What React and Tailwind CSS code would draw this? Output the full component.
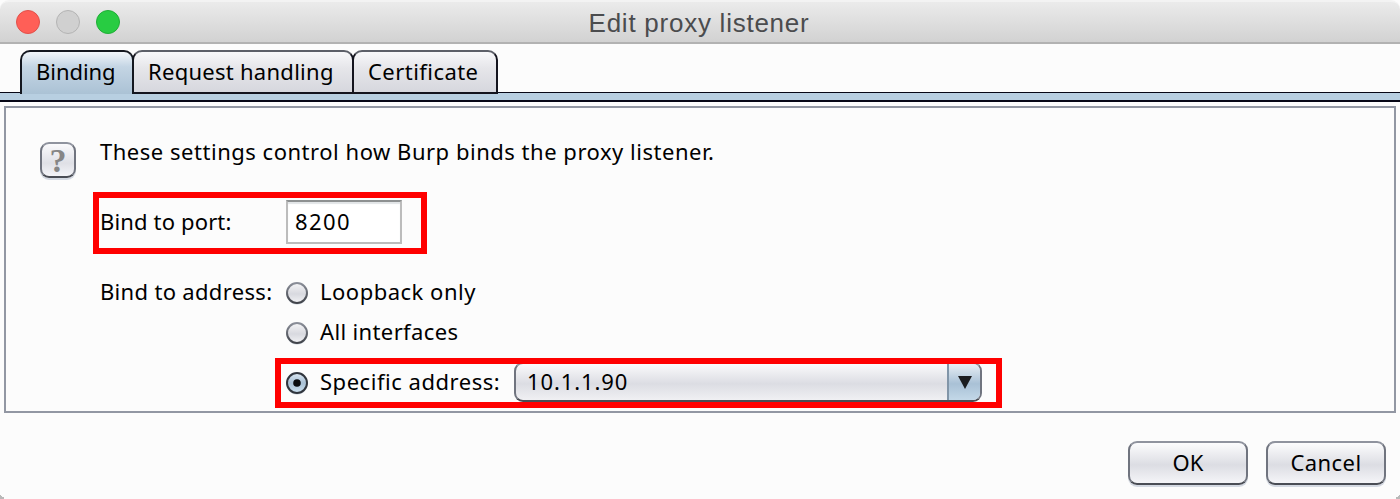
import { useState } from 'react';

const TABS = [
  { id: 'binding',     label: 'Binding',          box: 'w-[114px]', text: 'tracking-[-0.05px]' },
  { id: 'request',     label: 'Request handling', box: 'w-[222px] -ml-[2px]', text: 'tracking-[0.27px]' },
  { id: 'certificate', label: 'Certificate',      box: 'w-[146px] -ml-[2px]', text: 'tracking-[0.45px]' },
];

const TrafficLights = () => (
  <div className="absolute left-4 top-[10px] flex gap-4">
    <span className="w-6 h-6 rounded-full bg-[#ff5f57] border border-[#e2504a]"/>
    <span className="w-6 h-6 rounded-full bg-[#d0d0d0] border border-[#b4b4b4]"/>
    <span className="w-6 h-6 rounded-full bg-[#28cc42] border border-[#1fae36]"/>
  </div>
);

const CornerMark = ({ className }) => (
  <svg className={className} width="4" height="4" viewBox="0 0 4 4">
    <path d="M0 0H1V1H2V2H4V4H0Z" fill="#b9b9b9"/>
  </svg>
);

const Tab = ({ tab, active, onClick }) => (
  <button
    onClick={onClick}
    className={`relative shrink-0 text-left pl-[16px] h-[44px] border-2 rounded-t-[10px] ${tab.box} ${active
      ? 'z-10 border-[#14171f] border-b-0 bg-linear-to-b from-[#f2f6fa] via-[#c4d5e4] via-35% to-[#abc2d5]'
      : 'border-[#14141e] border-t-[#5c5f68] bg-linear-to-b from-[#f8f8fa] via-[#e6e6ea] via-40% to-[#d6d7de]'}`}>
    <span className={`block -ml-[2px] leading-[40px] whitespace-nowrap ${active ? '-mt-[4px]' : '-mt-[2px]'} ${tab.text}`}>{tab.label}</span>
  </button>
);

const Radio = ({ checked, onChange }) => (
  <button onClick={onChange} className="w-[22px] h-[23px] mt-[2px] shrink-0">
    <svg className="block" width="22" height="23" viewBox="0 0 22 23">
      <defs>
        <linearGradient id="ring" x1="0" y1="0" x2="0" y2="1">
          <stop offset="0" stopColor="#8b8f99"/>
          <stop offset="1" stopColor="#3f4249"/>
        </linearGradient>
        <linearGradient id="off" x1="0" y1="0" x2="0" y2="1">
          <stop offset="0" stopColor="#f5f5f7"/>
          <stop offset="0.55" stopColor="#d8d9df"/>
          <stop offset="1" stopColor="#f2f2f5"/>
        </linearGradient>
        <linearGradient id="on" x1="0" y1="0" x2="0" y2="1">
          <stop offset="0" stopColor="#dce8f2"/>
          <stop offset="0.5" stopColor="#a8c0d5"/>
          <stop offset="1" stopColor="#cfe3f2"/>
        </linearGradient>
      </defs>
      <circle cx="11" cy="12.3" r="10.4" fill="#d5dbe3"/>
      <circle cx="11" cy="11" r="10" fill={checked ? 'url(#on)' : 'url(#off)'} stroke={checked ? '#30353d' : 'url(#ring)'} strokeWidth="2"/>
      {checked && <circle cx="11" cy="11" r="3.8" fill="#0b0d10"/>}
    </svg>
  </button>
);

const Button = ({ children, text }) => (
  <button className={`w-[120px] h-[44px] rounded-[9px] border-2 border-[#70747f] border-t-[#8f939e] border-b-[#4a4d55] bg-linear-to-b from-[#fcfcfd] via-[#dcdde3] via-55% to-[#f5f5f8] shadow-[0_2px_0_#d4d9e2] leading-[38px] pb-[2px] ${text}`}>
    {children}
  </button>
);

const App = () => {
  const [activeTab, setActiveTab] = useState('binding');
  const [address,   setAddress]   = useState('specific');
  const [port,      setPort]      = useState('8200');

  return (
    <div className="relative w-[1400px] h-[499px] overflow-hidden bg-[#fcfcfc] text-black text-[22px] font-['Noto_Sans',sans-serif] flex flex-col">

      {/* Title bar */}
      <header className="relative h-[44px] shrink-0 rounded-t-[9px] border-t-2 border-t-[#f3f3f3] border-b-2 border-b-[#b2b2b2] bg-linear-to-b from-[#ebebeb] to-[#d2d2d2] flex justify-center">
        <div className="absolute left-0 -top-[2px]"><TrafficLights/></div>
        <h1 className="-ml-[2px] font-['Liberation_Sans',sans-serif] text-[26px] leading-[42px] text-[#4b4c4e] tracking-[0.75px] whitespace-nowrap">Edit proxy listener</h1>
      </header>

      {/* Tabs */}
      <nav className="h-[50px] shrink-0 pt-[6px] pl-5 flex items-start">
        {TABS.map(t => <Tab key={t.id} tab={t} active={t.id === activeTab} onClick={() => setActiveTab(t.id)}/>)}
      </nav>
      <div className="h-[10px] -mt-[2px] shrink-0 border-t border-t-[#070716] border-b-2 border-b-[#070716] bg-[#b8cfe1]"/>

      {/* Binding panel */}
      <main className="mx-1 mt-1 h-[307px] shrink-0 border-2 border-[#9297a3] flex">
        <div className="w-[94px] shrink-0 pt-[34px] pl-[34px]">
          <div className="w-[36px] h-[36px] rounded-[9px] border-2 border-[#70747f] border-t-[#8f939e] border-b-[#4a4d55] bg-linear-to-b from-[#fafafc] via-[#dfe0e6] via-60% to-[#f4f4f8] shadow-[0_2px_0_#d4d9e2] flex justify-center font-['Liberation_Serif',serif] font-bold text-[34px] leading-[34px] text-[#868686]">?</div>
        </div>

        <div className="flex flex-col">
          <p className="mt-[23px] h-[40px] leading-[40px] tracking-[0.52px] whitespace-nowrap">These settings control how Burp binds the proxy listener.</p>

          <div className="relative mt-[29px] h-[44px] flex items-center">
            <span className="w-[186px] pb-[2px] tracking-[0.15px]">Bind to port:</span>
            <input value={port} onChange={e => setPort(e.target.value)}
              className="w-[116px] h-[44px] pl-[7px] pb-[2px] bg-white border-2 border-[#bcbcbc] border-t-[#8d9091] shadow-[inset_0_2px_1px_#e2e5e7] tracking-[1.4px] outline-none"/>
            <div className="absolute -left-[7px] -top-[8px] w-[334px] h-[62px] border-6 border-[#ff0000] pointer-events-none"/>
          </div>

          <div className="mt-[28px] flex">
            <span className="w-[186px] leading-[38px] tracking-[0.32px]">Bind to address:</span>
            <div className="flex flex-col">
              <div className="h-[40px] flex items-center gap-[12px]">
                <Radio checked={address === 'loopback'} onChange={() => setAddress('loopback')}/>
                <span className="pb-[2px] tracking-[0.5px]">Loopback only</span>
              </div>
              <div className="h-[40px] flex items-center gap-[12px]">
                <Radio checked={address === 'all'} onChange={() => setAddress('all')}/>
                <span className="pb-[2px] tracking-[0.36px]">All interfaces</span>
              </div>
              <div className="relative mt-[10px] h-[40px] flex items-center">
                <Radio checked={address === 'specific'} onChange={() => setAddress('specific')}/>
                <span className="w-[194px] ml-[12px] pb-[2px] tracking-[0.53px] whitespace-nowrap">Specific address:</span>
                <button className="w-[468px] h-[40px] flex overflow-hidden rounded-[9px] border-2 border-[#70747f] border-t-[#8f939e] border-b-[#4a4d55] bg-linear-to-b from-[#fafafb] via-[#dcdde3] via-55% to-[#f0f0f3]">
                  <span className="flex-1 text-left pl-[11px] leading-[34px] tracking-[0.9px]">10.1.1.90</span>
                  <span className="w-[33px] h-full border-l-2 border-l-[#8195a8] bg-linear-to-b from-[#e8eff5] via-[#a9c1d6] via-55% to-[#c3d8e8] flex items-center justify-center">
                    <svg width="14" height="13" viewBox="0 0 14 13"><path d="M0 0H14L7 13Z" fill="#1b1d20"/></svg>
                  </span>
                </button>
                <div className="absolute -left-[11px] -top-[4px] w-[727px] h-[50px] border-6 border-[#ff0000] pointer-events-none"/>
              </div>
            </div>
          </div>
        </div>
      </main>

      {/* Actions */}
      <footer className="flex justify-end gap-[18px] pt-[28px] pr-[14px]">
        <Button text="tracking-normal">OK</Button>
        <Button text="tracking-[0.45px]">Cancel</Button>
      </footer>

      <CornerMark className="absolute left-0 bottom-0"/>
      <CornerMark className="absolute right-0 bottom-0 -scale-x-100"/>
    </div>
  );
};

export default App;
